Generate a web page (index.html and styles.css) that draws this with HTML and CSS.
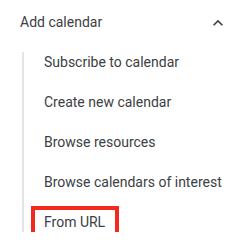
FILE: index.html
```html
<!DOCTYPE html>
<html>
<head>
<meta charset="utf-8">
<link rel="stylesheet" href="styles.css">
</head>
<body>
<div class="panel">
  <div class="header">
    <span class="title">Add calendar</span>
    <svg class="chevron" viewBox="0 0 24 24" width="20" height="20"><path d="M12 8l-6 6 1.41 1.41L12 10.83l4.59 4.58L18 14z"/></svg>
  </div>
  <div class="list">
    <div class="item">Subscribe to calendar</div>
    <div class="item">Create new calendar</div>
    <div class="item">Browse resources</div>
    <div class="item">Browse calendars of interest</div>
    <div class="item item-marked">From URL<span class="mark"></span></div>
  </div>
</div>
</body>
</html>
```
FILE: styles.css
```css
html, body {
  margin: 0;
  padding: 0;
  background: #ffffff;
}
body {
  font-family: Roboto, "Liberation Sans", Arial, sans-serif;
  font-size: 14px;
  line-height: 20px;
  color: #3c4043;
}
.panel {
  width: 250px;
  padding-top: 12px;
}
.header {
  display: flex;
  align-items: center;
  justify-content: space-between;
  height: 20px;
  padding: 0 22px 0 20px;
}
.chevron {
  fill: #3c4043;
  margin-top: 2px;
}
.list {
  margin: 20px 0 0 22px;
  border-left: 2px solid #e3e3e6;
  padding-left: 20px;
  display: flex;
  flex-direction: column;
  gap: 20px;
}
.item {
  height: 20px;
  white-space: nowrap;
}
.item-marked {
  position: relative;
}
.mark {
  position: absolute;
  left: -13px;
  top: -6px;
  width: 88px;
  height: 31px;
  box-sizing: border-box;
  border: 4px solid #f2291b;
}
```
